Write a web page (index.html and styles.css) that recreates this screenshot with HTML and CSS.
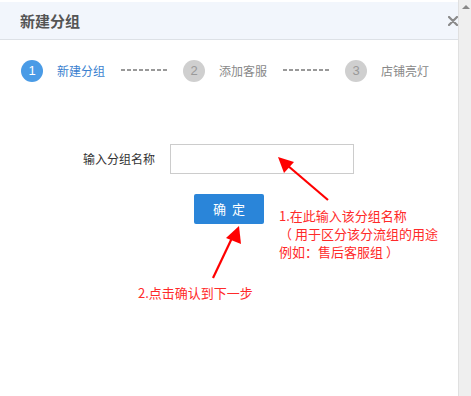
FILE: index.html
```html
<!DOCTYPE html>
<html lang="zh-CN">
<head>
  <meta charset="UTF-8">
  <title>新建分组</title>
  <link rel="stylesheet" href="styles.css">
</head>
<body>
  <div class="dialog">
    <div class="dialog-header">
      <span class="dialog-title">新建分组</span>
      <svg class="dialog-close" width="10" height="10" viewBox="0 0 10 10">
        <path d="M1 1 L9 9 M9 1 L1 9" stroke="#8a8a8a" stroke-width="2.2" stroke-linecap="round"/>
      </svg>
    </div>

    <div class="steps">
      <span class="step-num active">1</span>
      <span class="step-text active">新建分组</span>
      <span class="step-dots"></span>
      <span class="step-num">2</span>
      <span class="step-text">添加客服</span>
      <span class="step-dots"></span>
      <span class="step-num">3</span>
      <span class="step-text">店铺亮灯</span>
    </div>

    <form class="group-form">
      <div class="form-row">
        <label for="groupName">输入分组名称</label>
        <input type="text" id="groupName" name="groupName">
      </div>
      <button type="button" class="btn-ok">确&nbsp;&nbsp;定</button>
    </form>

    <!-- red annotations drawn over the dialog -->
    <svg class="arrows" width="459" height="396" viewBox="0 0 459 396">
      <line x1="328" y1="200" x2="287" y2="165" stroke="#f00" stroke-width="2.2"/>
      <polygon points="278,157 294,162 284,173" fill="#f00"/>
      <line x1="213" y1="278" x2="232" y2="238" stroke="#f00" stroke-width="2.2"/>
      <polygon points="239,226 241,244 226,238" fill="#f00"/>
    </svg>
    <div class="note note-one">1.在此输入该分组名称<br>（ 用于区分该分流组的用途<br>例如：售后客服组 ）</div>
    <div class="note note-two">2.点击确认到下一步</div>
  </div>

  <div class="scrollbar">
    <span class="scroll-up"></span>
  </div>
</body>
</html>
```

FILE: styles.css
```css
body {
  margin: 0;
  display: flex;
  height: 396px;
  overflow: hidden;
  font-family: "Noto Sans CJK SC", "Liberation Sans", sans-serif;
  background: #fff;
}
.dialog {
  position: relative;
  width: 459px;
  height: 396px;
  padding-top: 2px;
  box-sizing: border-box;
}
.dialog-header {
  height: 37px;
  background: #f2f6fc;
  border-bottom: 1px solid #dde1e6;
  display: flex;
  align-items: center;
  justify-content: space-between;
  padding: 0 0 0 20px;
}
.dialog-title {
  font-size: 15px;
  font-weight: bold;
  color: #555;
  line-height: 20px;
}
.dialog-close {
  display: block;
  margin-top: 1px;
}
.steps {
  display: flex;
  align-items: center;
  margin-top: 20px;
  padding-left: 21px;
  height: 22px;
}
.step-num {
  width: 22px;
  height: 22px;
  border-radius: 50%;
  background: #cfcfcf;
  color: #999;
  font-family: "Liberation Sans", sans-serif;
  font-size: 13px;
  line-height: 22px;
  text-align: center;
}
.step-num.active {
  background: #4a9be6;
  color: #fff;
}
.step-text {
  font-size: 12px;
  line-height: 16px;
  color: #888;
  margin-left: 14px;
  width: 48px;
  white-space: nowrap;
}
.step-text.active {
  color: #3a7fcf;
}
.step-dots {
  width: 48px;
  height: 2px;
  margin: 0 14px 2px 16px;
  background: repeating-linear-gradient(to right, #999 0 4px, transparent 4px 6px);
}
.group-form {
  margin-top: 62px;
}
.form-row {
  display: flex;
  align-items: center;
  padding-left: 83px;
}
.form-row label {
  font-size: 12px;
  line-height: 16px;
  color: #333;
  width: 87px;
  white-space: nowrap;
}
.form-row input {
  width: 184px;
  height: 30px;
  box-sizing: border-box;
  border: 1px solid #ccc;
  padding: 0 8px;
  outline: none;
}
.btn-ok {
  display: block;
  margin: 20px 0 0 194px;
  width: 70px;
  height: 30px;
  border: none;
  border-radius: 2px;
  background: #2a85d9;
  color: #fff;
  font-family: "Noto Sans CJK SC", sans-serif;
  font-size: 13px;
  line-height: 30px;
  padding: 0;
  cursor: pointer;
}
.arrows {
  position: absolute;
  left: 0;
  top: 0;
  pointer-events: none;
}
.note {
  position: absolute;
  font-size: 13px;
  line-height: 18px;
  color: #ff2a2a;
  white-space: nowrap;
}
.note-one {
  left: 279px;
  top: 207px;
}
.note-two {
  left: 138px;
  top: 284px;
}
.scrollbar {
  position: relative;
  width: 12px;
  height: 396px;
  background: #efefef;
  border-left: 1px solid #e0e0e0;
}
.scroll-up {
  position: absolute;
  top: 5px;
  left: 3px;
  width: 0;
  height: 0;
  border-left: 4px solid transparent;
  border-right: 4px solid transparent;
  border-bottom: 4px solid #888;
}
```
